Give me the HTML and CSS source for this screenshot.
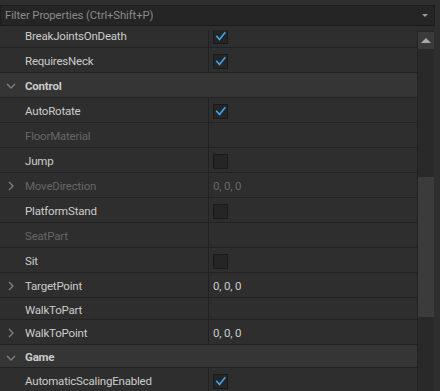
FILE: index.html
```html
<!DOCTYPE html>
<html>
<head>
<meta charset="utf-8">
<link rel="stylesheet" href="styles.css">
</head>
<body>
<div class="filter">
  <span class="filter-text">Filter Properties (Ctrl+Shift+P)</span>
  <span class="filter-drop"></span>
</div>
<div class="panel">
  <div class="list">
    <div class="rows">
      <div class="row"><div class="name">BreakJointsOnDeath</div><div class="value"><span class="cb on"><svg viewBox="0 0 15 15"><polyline points="3.3,6.8 6.5,10.5 12.3,3.3"/></svg></span></div></div>
      <div class="row"><div class="name">RequiresNeck</div><div class="value"><span class="cb on"><svg viewBox="0 0 15 15"><polyline points="3.3,6.8 6.5,10.5 12.3,3.3"/></svg></span></div></div>
      <div class="row cat"><span class="chev-down"><svg viewBox="0 0 10 6"><polyline points="1,1 5,5 9,1"/></svg></span><div class="name">Control</div></div>
      <div class="row"><div class="name">AutoRotate</div><div class="value"><span class="cb on"><svg viewBox="0 0 15 15"><polyline points="3.3,6.8 6.5,10.5 12.3,3.3"/></svg></span></div></div>
      <div class="row"><div class="name dim">FloorMaterial</div><div class="value"></div></div>
      <div class="row"><div class="name">Jump</div><div class="value"><span class="cb"></span></div></div>
      <div class="row"><span class="chev-right"><svg viewBox="0 0 6 10"><polyline points="1,1 5,5 1,9"/></svg></span><div class="name dim">MoveDirection</div><div class="value dim">0, 0, 0</div></div>
      <div class="row"><div class="name">PlatformStand</div><div class="value"><span class="cb"></span></div></div>
      <div class="row"><div class="name dim">SeatPart</div><div class="value"></div></div>
      <div class="row"><div class="name">Sit</div><div class="value"><span class="cb"></span></div></div>
      <div class="row"><span class="chev-right"><svg viewBox="0 0 6 10"><polyline points="1,1 5,5 1,9"/></svg></span><div class="name">TargetPoint</div><div class="value">0, 0, 0</div></div>
      <div class="row short"><div class="name">WalkToPart</div><div class="value"></div></div>
      <div class="row"><span class="chev-right"><svg viewBox="0 0 6 10"><polyline points="1,1 5,5 1,9"/></svg></span><div class="name">WalkToPoint</div><div class="value">0, 0, 0</div></div>
      <div class="row cat short2"><span class="chev-down"><svg viewBox="0 0 10 6"><polyline points="1,1 5,5 9,1"/></svg></span><div class="name">Game</div></div>
      <div class="row"><div class="name">AutomaticScalingEnabled</div><div class="value"><span class="cb on"><svg viewBox="0 0 15 15"><polyline points="3.3,6.8 6.5,10.5 12.3,3.3"/></svg></span></div></div>
    </div>
  </div>
  <div class="scrollbar">
    <div class="sb-up"><span class="tri-up"></span></div>
    <div class="sb-gap1"></div>
    <div class="sb-thumb"></div>
  </div>
</div>
</body>
</html>
```
FILE: styles.css
```css
html, body {
  margin: 0;
  padding: 0;
}
body {
  width: 440px;
  height: 391px;
  overflow: hidden;
  background: #2e2e2e;
  font-family: Roboto, "Liberation Sans", sans-serif;
  font-size: 11.5px;
  letter-spacing: -0.2px;
  color: #cccccc;
}
.filter {
  box-sizing: border-box;
  margin-top: 5px;
  width: 435px;
  height: 21px;
  background: #252525;
  border: 1px solid #1c1c1c;
  display: flex;
  align-items: center;
  justify-content: space-between;
  padding: 0 5px 0 4px;
}
.filter-text {
  color: #8a8a8a;
  font-size: 11.3px;
  letter-spacing: -0.1px;
}
.filter-drop {
  width: 0;
  height: 0;
  border-left: 3px solid transparent;
  border-right: 3px solid transparent;
  border-top: 3px solid #9a9a9a;
  margin-right: 1px;
}
.panel {
  margin-top: 4px;
  display: flex;
  height: 361px;
}
.list {
  width: 417px;
  height: 361px;
  overflow: hidden;
}
.rows {
  margin-top: -7px;
}
.row {
  position: relative;
  box-sizing: border-box;
  height: 25px;
  border-bottom: 1px solid #222222;
  display: flex;
  align-items: center;
}
.row.short {
  height: 22px;
}
.row.short2 {
  height: 23px;
}
.row.cat {
  background: #353535;
}
.name {
  box-sizing: border-box;
  width: 209px;
  height: 100%;
  padding-left: 25px;
  padding-top: 2px;
  display: flex;
  align-items: center;
  border-right: 1px solid #222222;
  white-space: nowrap;
}
.cat .name {
  border-right: none;
  font-weight: bold;
  padding-top: 1px;
}
.dim {
  color: #666666;
}
.value {
  flex: 1;
  padding-left: 4px;
  display: flex;
  align-items: center;
  height: 100%;
  box-sizing: border-box;
  padding-top: 2px;
}
.cb {
  box-sizing: border-box;
  width: 15px;
  height: 15px;
  background: #252525;
  border: 1px solid #1a1a1a;
  display: block;
}
.cb svg {
  display: block;
  width: 15px;
  height: 15px;
  margin: -1px;
}
.cb polyline {
  fill: none;
  stroke: #3aa8f0;
  stroke-width: 1.6;
}
.chev-down {
  position: absolute;
  left: 6px;
  top: 10px;
  width: 10px;
  height: 6px;
}
.chev-down svg, .chev-right svg {
  display: block;
  width: 100%;
  height: 100%;
}
.chev-down polyline, .chev-right polyline {
  fill: none;
  stroke: #808080;
  stroke-width: 1.3;
}
.chev-right {
  position: absolute;
  left: 8px;
  top: 8px;
  width: 6px;
  height: 10px;
}
.scrollbar {
  width: 17px;
  height: 361px;
  background: #292929;
  border-left: 1px solid #222222;
  box-sizing: border-box;
  display: flex;
  flex-direction: column;
}
.sb-up {
  height: 17px;
  margin-top: 2px;
  background: #3a3a3a;
  display: flex;
  align-items: center;
  justify-content: center;
}
.tri-up {
  width: 0;
  height: 0;
  border-left: 5px solid transparent;
  border-right: 5px solid transparent;
  border-bottom: 5px solid #a8a8a8;
}
.sb-gap1 {
  height: 128px;
}
.sb-thumb {
  height: 140px;
  background: #3b3b3b;
}
```
